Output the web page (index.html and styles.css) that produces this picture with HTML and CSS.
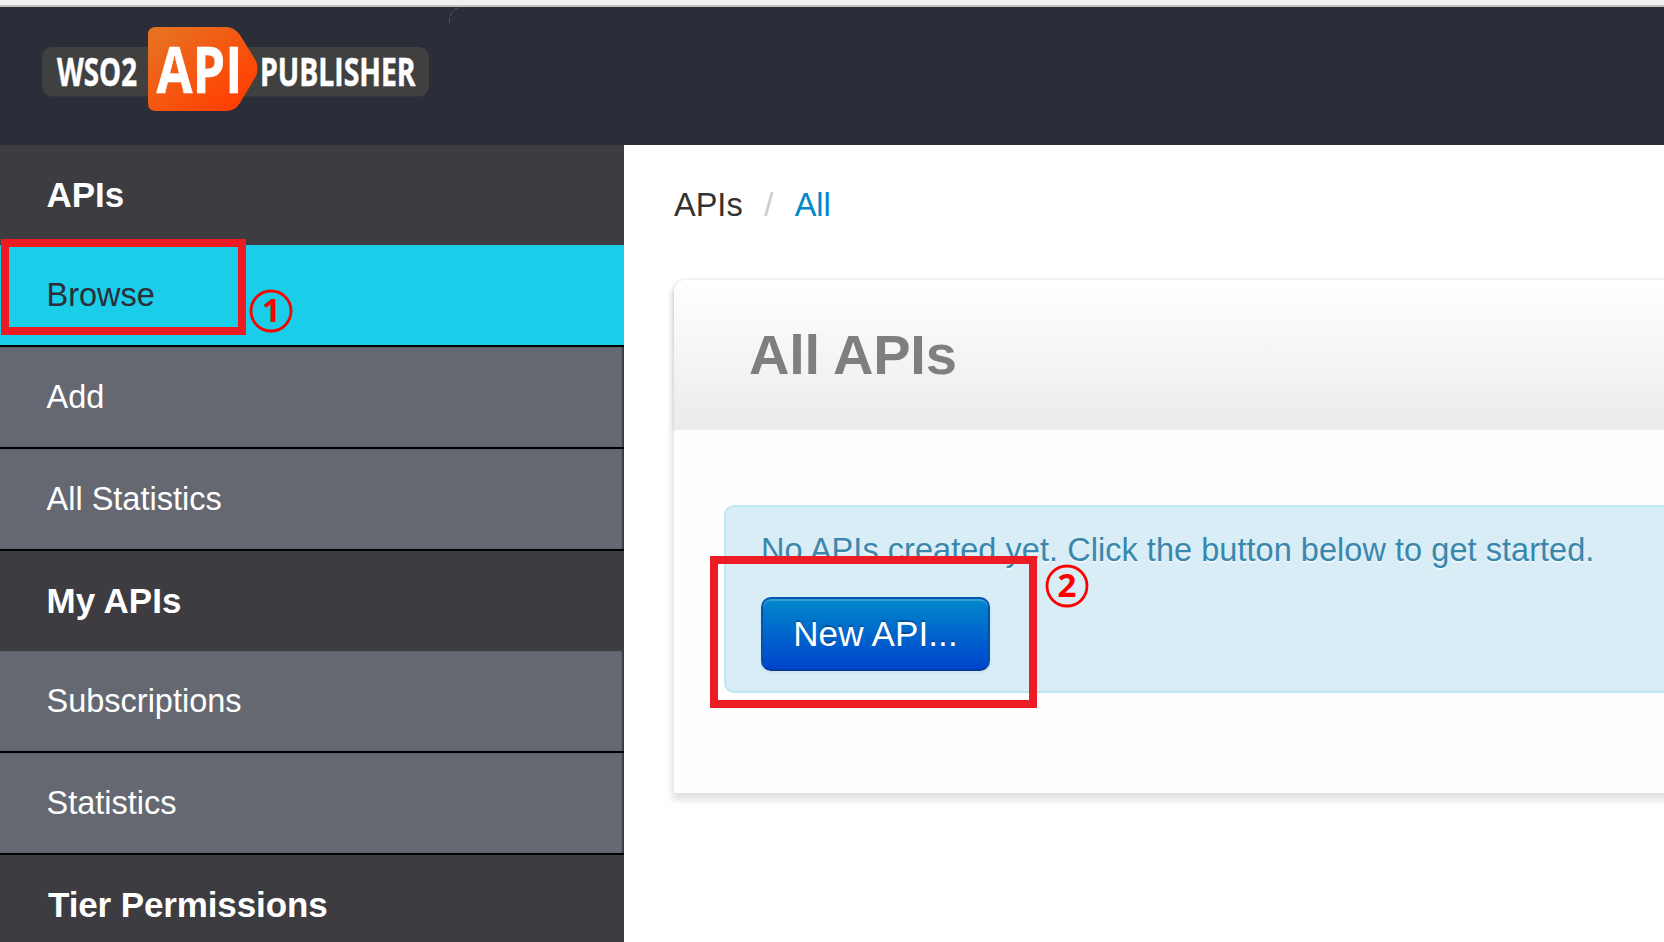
FILE: index.html
```
<!DOCTYPE html>
<html lang="en">
<head>
<meta charset="utf-8">
<title>WSO2 API Publisher</title>
<link rel="stylesheet" href="styles.css">
</head>
<body>
<div class="chrome-edge"></div>
<header class="header">
  <svg class="logo" width="480" height="138" viewBox="0 7 480 138">
    <defs>
      <linearGradient id="badge" x1="0" y1="0" x2="1" y2="1">
        <stop offset="0" stop-color="#e57623"/>
        <stop offset="0.85" stop-color="#ff4003"/>
      </linearGradient>
    </defs>
    <rect x="42" y="47" width="387" height="49.500" rx="10" fill="#404040"/>
    <path d="M156 27H226Q234 27 240 35L256 61Q259 69 256 76L240 103Q235 111 226 111H156Q148 111 148 103V35Q148 27 156 27Z" fill="url(#badge)"/>
    <g class="logo-text">
      <text x="57" y="86" font-size="38.500" textLength="80" lengthAdjust="spacingAndGlyphs">WSO2</text>
      <text x="156.500" y="92.500" font-size="64" textLength="86" lengthAdjust="spacingAndGlyphs">API</text>
      <text x="260" y="86" font-size="38.500" textLength="155.500" lengthAdjust="spacingAndGlyphs">PUBLISHER</text>
    </g>
    <path d="M449.500 23V20Q451 9 459 7.500" fill="none" stroke="#5a5e66" stroke-width="0.800" stroke-dasharray="5 2"/>
  </svg>
</header>
<div class="layout">
  <nav class="sidebar">
    <h2 class="nav-title">APIs</h2>
    <a class="nav-item nav-item-active">Browse</a>
    <a class="nav-item">Add</a>
    <a class="nav-item">All Statistics</a>
    <h2 class="nav-title">My APIs</h2>
    <a class="nav-item">Subscriptions</a>
    <a class="nav-item">Statistics</a>
    <h2 class="nav-title nav-title-tier">Tier Permissions</h2>
  </nav>
  <main class="main">
    <div class="breadcrumb"><span>APIs</span><span class="divider">/</span><a class="crumb-link">All</a></div>
    <section class="panel">
      <div class="panel-head"><h1 class="panel-title">All APIs</h1></div>
      <div class="panel-body">
        <div class="alert">
          <p class="alert-text">No APIs created yet. Click the button below to get started.</p>
          <a class="button">New API...</a>
        </div>
      </div>
    </section>
  </main>
</div>
<div class="mark mark-browse"></div>
<div class="mark mark-new"></div>
<svg class="step step-one" width="46" height="46"><circle cx="23" cy="23" r="20"/><text x="23.500" y="34">1</text></svg>
<svg class="step step-two" width="46" height="46"><circle cx="23" cy="23" r="20"/><text x="23" y="34">2</text></svg>
</body>
</html>
```
FILE: styles.css
```
* { box-sizing: border-box; }
body {
  position: relative;
  margin: 0;
  width: 1664px;
  height: 942px;
  overflow: hidden;
  background: #fff;
  font-family: "Liberation Sans", Arial, sans-serif;
  font-size: 32.500px;
  color: #333;
}
h1, h2, p { margin: 0; }
.chrome-edge { height: 7px; background: #f0f0f0; border-bottom: 2px solid #bdc3c0; }
.header { height: 138px; background: #2b2e39; }
.logo { display: block; }
.logo-text {
  font-family: "Open Sans", "Noto Sans", sans-serif;
  font-weight: 700;
  fill: #fff;
  stroke: #fff;
  stroke-width: .5;
}
.layout { display: flex; height: 797px; overflow: hidden; }
.sidebar { flex: none; width: 624px; }
.nav-title {
  height: 100px;
  padding-left: 46.500px;
  line-height: 100px;
  font-size: 35px;
  font-weight: 700;
  color: #fff;
  background: #3c3c41;
}
.nav-title-tier { padding-left: 48px; letter-spacing: -.12px; }
.nav-item {
  display: block;
  height: 102px;
  padding-left: 46.500px;
  line-height: 100px;
  color: #fff;
  background: #656871;
  border-bottom: 2px solid #000;
  box-shadow: inset -2px 0 1px #3a3d49;
}
.nav-item-active { color: #2b2e39; background: #1acde8; box-shadow: none; }
.main { flex: 1; min-width: 0; padding: 40px 0 0 50px; }
.breadcrumb { display: flex; height: 95px; line-height: 40px; }
.divider { margin: 0 21.500px; color: #ccc; }
.crumb-link { color: #0088cc; }
.panel {
  width: 1040px;
  height: 513px;
  border-radius: 12px 0 0 0;
  box-shadow: 0 5px 7px 2px rgba(0, 0, 0, .12);
}
.panel-head {
  height: 150px;
  padding-left: 75px;
  border-radius: 12px 0 0 0;
  background: linear-gradient(#fff, #ebebeb);
  box-shadow: 0 1px 5px rgba(0, 0, 0, .15);
}
.panel-title { line-height: 150px; font-size: 56px; letter-spacing: -.25px; color: #7f7f7f; }
.panel-body { position: relative; height: 363px; padding: 75px 0 0 50px; background: #fefefe; }
.alert {
  height: 188px;
  padding: 23px 0 0 35px;
  border: 2px solid #bce8f1;
  border-right: 0;
  border-radius: 10px 0 0 10px;
  background: #d9edf7;
  color: #3a87ad;
}
.alert-text {
  height: 67px;
  line-height: 40px;
  letter-spacing: .04px;
  white-space: nowrap;
  text-shadow: 0 2px 0 rgba(255, 255, 255, .5);
}
.button {
  display: block;
  width: 229px;
  height: 74px;
  border: 2px solid #0055b0;
  border-bottom-color: #003c9c;
  border-radius: 10px;
  background: linear-gradient(#0088cc, #0044cc);
  box-shadow: inset 0 2px 0 rgba(255, 255, 255, .2), 0 2px 4px rgba(0, 0, 0, .05);
  line-height: 70px;
  text-align: center;
  font-size: 35px;
  letter-spacing: .12px;
  color: #fff;
  text-shadow: 0 -2px 0 rgba(0, 0, 0, .25);
}
.mark { position: absolute; border: 8px solid #ed1c24; }
.mark-browse { left: 1px; top: 239px; width: 245px; height: 96px; }
.mark-new { left: 710px; top: 556px; width: 327px; height: 152px; }
.step { position: absolute; }
.step circle { fill: none; stroke: #f00; stroke-width: 2.800; }
.step text { font: 700 33px "Noto Sans", sans-serif; fill: #f00; text-anchor: middle; }
.step-one { left: 247.500px; top: 288px; }
.step-two { left: 1043.500px; top: 563px; }
```
